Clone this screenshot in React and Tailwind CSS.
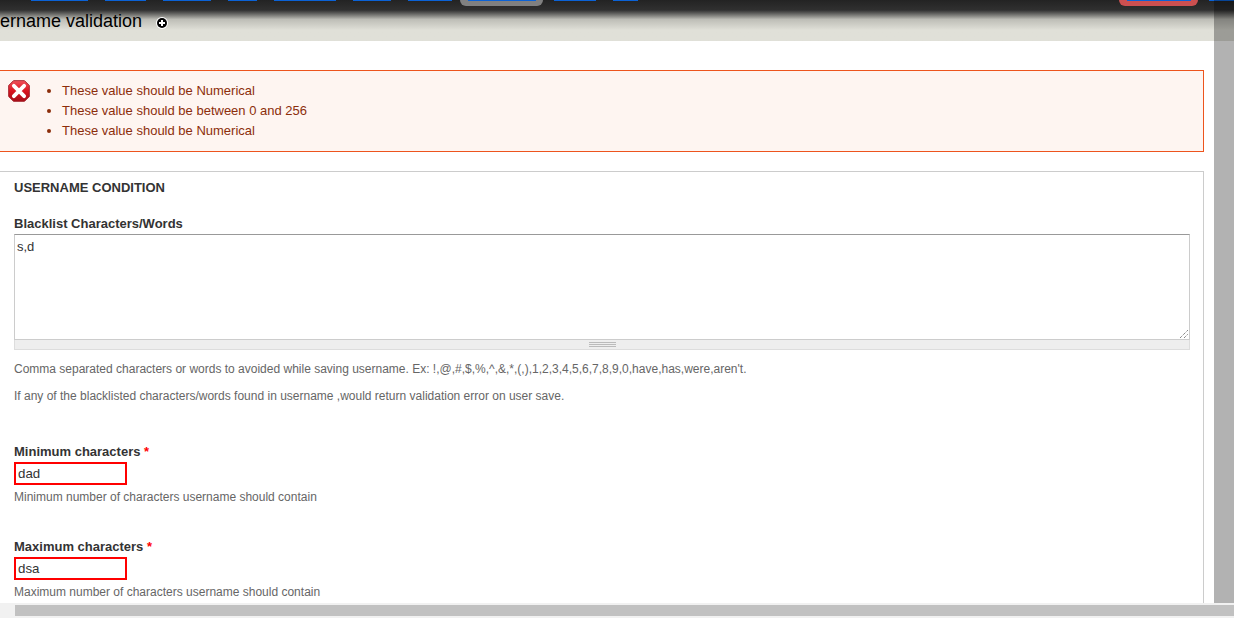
import React from "react";

const navLinks = [
    { width: "w-[57px]", gap: "ml-[31px]" },
    { width: "w-[41px]", gap: "ml-[17px]" },
    { width: "w-[48px]", gap: "ml-[17px]" },
    { width: "w-[29px]", gap: "ml-[17px]" },
    { width: "w-[62px]", gap: "ml-[17px]" },
    { width: "w-[38px]", gap: "ml-[17px]" },
    { width: "w-[44px]", gap: "ml-[17px]" },
];

function ErrorIcon() {
    return (
        <svg width="22" height="22" viewBox="0 0 24 24" className="shrink-0">
            <defs>
                <linearGradient id="errorFill" x1="0" y1="0" x2="0" y2="1">
                    <stop offset="0" stopColor="#f0525c" />
                    <stop offset="0.5" stopColor="#d9141f" />
                    <stop offset="1" stopColor="#a50d18" />
                </linearGradient>
            </defs>
            <polygon points="6,0.7 18,0.7 23.3,6 23.3,18 18,23.3 6,23.3 0.7,18 0.7,6" fill="url(#errorFill)" stroke="#a3202a" strokeWidth="1" strokeLinejoin="round" />
            <path d="M6.4 6.4L17.6 17.6M17.6 6.4L6.4 17.6" stroke="#ffffff" strokeWidth="4.2" strokeLinecap="round" />
        </svg>
    );
}

function Field({ label, value, help }) {
    return (
        <div className="mb-[33px]">
            <label className="block font-bold text-[13px] leading-[16px] text-[#333333]">
                {label} <span className="text-[#ff0000]">*</span>
            </label>
            <input
                readOnly
                value={value}
                className="block mt-[2px] w-[113px] h-[23px] px-[2px] border-2 border-[#ff0000] text-[13.3px] text-[#333333] outline-none"
            />
            <p className="mt-[3px] text-[12px] leading-[18px] text-[#666666]">{help}</p>
        </div>
    );
}

export default function App() {
    return (
        <div className="relative h-[626px] w-[1234px] overflow-hidden bg-white font-['Liberation_Sans',sans-serif]">
            {/* Toolbar and page title */}
            <header className="h-[41px] bg-[#e0e0d8]">
                <div className="h-[10px] bg-gradient-to-b from-[#232323] to-[#303030] flex items-start">
                    {navLinks.map((link, i) => (
                        <span key={i} className={`h-[1px] bg-[#0b62d6] ${link.width} ${link.gap}`} />
                    ))}
                    <span className="ml-[8px] h-[6px] w-[83px] rounded-b-[8px] bg-[#808080] flex justify-center">
                        <span className="h-[1px] w-[68px] bg-[#0b62d6]" />
                    </span>
                    <span className="ml-[11px] h-[1px] w-[42px] bg-[#0b62d6]" />
                    <span className="ml-[17px] h-[1px] w-[25px] bg-[#0b62d6]" />
                    <span className="ml-auto h-[6px] w-[79px] rounded-b-[8px] bg-[#cc5050] flex justify-center">
                        <span className="h-[1px] w-[64px] bg-[#0b62d6]" />
                    </span>
                    <span className="ml-[11px] h-[1px] w-[25px] bg-[#0b62d6]" />
                </div>
                <div className="h-[31px] bg-gradient-to-b from-[#303030] via-[#bdbdb6] via-[30%] to-[#e0e0d8] to-[65%] flex items-start">
                    <h1 className="-mt-[1px] text-[18px] leading-[24px] text-black">ername validation</h1>
                    <svg width="12" height="12" viewBox="0 0 12 12" className="ml-[14px] mt-[7px] shrink-0">
                        <circle cx="6" cy="6" r="6" fill="#ffffff" />
                        <circle cx="6" cy="6" r="5" fill="#000000" />
                        <path d="M6 3V9M3 6H9" stroke="#ffffff" strokeWidth="2" />
                    </svg>
                </div>
            </header>

            <main className="pt-[29px] pr-[30px]">
                {/* Error messages */}
                <div className="flex h-[82px] border-y border-r border-[#ed541d] bg-[#fef5f1] pl-[8px] pt-[9px]">
                    <ErrorIcon />
                    <ul className="ml-[32px] mt-[1px] list-disc text-[13px] leading-[20px] text-[#8c2e0b]">
                        <li>These value should be Numerical</li>
                        <li>These value should be between 0 and 256</li>
                        <li>These value should be Numerical</li>
                    </ul>
                </div>

                {/* Username condition */}
                <section className="mt-[19px] h-[432px] overflow-hidden border-t border-r border-[#cccccc] pl-[14px] pr-[13px] pt-[8px]">
                    <h2 className="font-bold text-[13px] leading-[16px] text-[#333333]">USERNAME CONDITION</h2>
                    <label className="block mt-[20px] font-bold text-[13px] leading-[16px] text-[#333333]">
                        Blacklist Characters/Words
                    </label>
                    <div className="mt-[2px]">
                        <div className="relative h-[106px] border border-[#cccccc] border-t-[#999999] px-[2px] pt-[4px] text-[13px] leading-[16px] text-[#333333]">
                            s,d
                            <svg width="8" height="8" viewBox="0 0 8 8" className="absolute right-[1px] bottom-[1px]">
                                <path d="M0 8L8 0M4 8L8 4" stroke="#555555" strokeWidth="1" strokeDasharray="1 1" />
                            </svg>
                        </div>
                        <div className="h-[10px] bg-[#eeeeee] border-b border-x border-[#dddddd] flex justify-center items-center">
                            <div className="w-[27px] h-[5px] border-y border-[#bbbbbb] flex items-center">
                                <div className="w-full h-[1px] bg-[#bbbbbb]" />
                            </div>
                        </div>
                    </div>
                    <p className="mt-[10px] text-[12px] leading-[18px] text-[#666666]">
                        Comma separated characters or words to avoided while saving username. Ex: !,@,#,$,%,^,&amp;,*,(,),1,2,3,4,5,6,7,8,9,0,have,has,were,aren't.
                    </p>
                    <p className="mt-[9px] text-[12px] leading-[18px] text-[#666666]">
                        If any of the blacklisted characters/words found in username ,would return validation error on user save.
                    </p>
                    <div className="mt-[39px]">
                        <Field label="Minimum characters" value="dad" help="Minimum number of characters username should contain" />
                        <Field label="Maximum characters" value="dsa" help="Maximum number of characters username should contain" />
                    </div>
                </section>
            </main>

            {/* Browser scrollbars */}
            <div className="absolute top-0 right-0 w-[20px] h-[603px] bg-[#0000004d]" />
            <div className="absolute left-0 bottom-[8px] w-full h-[15px] bg-[#f1f1f1] flex items-center">
                <div className="ml-[15px] h-[11px] flex-1 bg-[#c1c1c1]" />
            </div>
        </div>
    );
}
